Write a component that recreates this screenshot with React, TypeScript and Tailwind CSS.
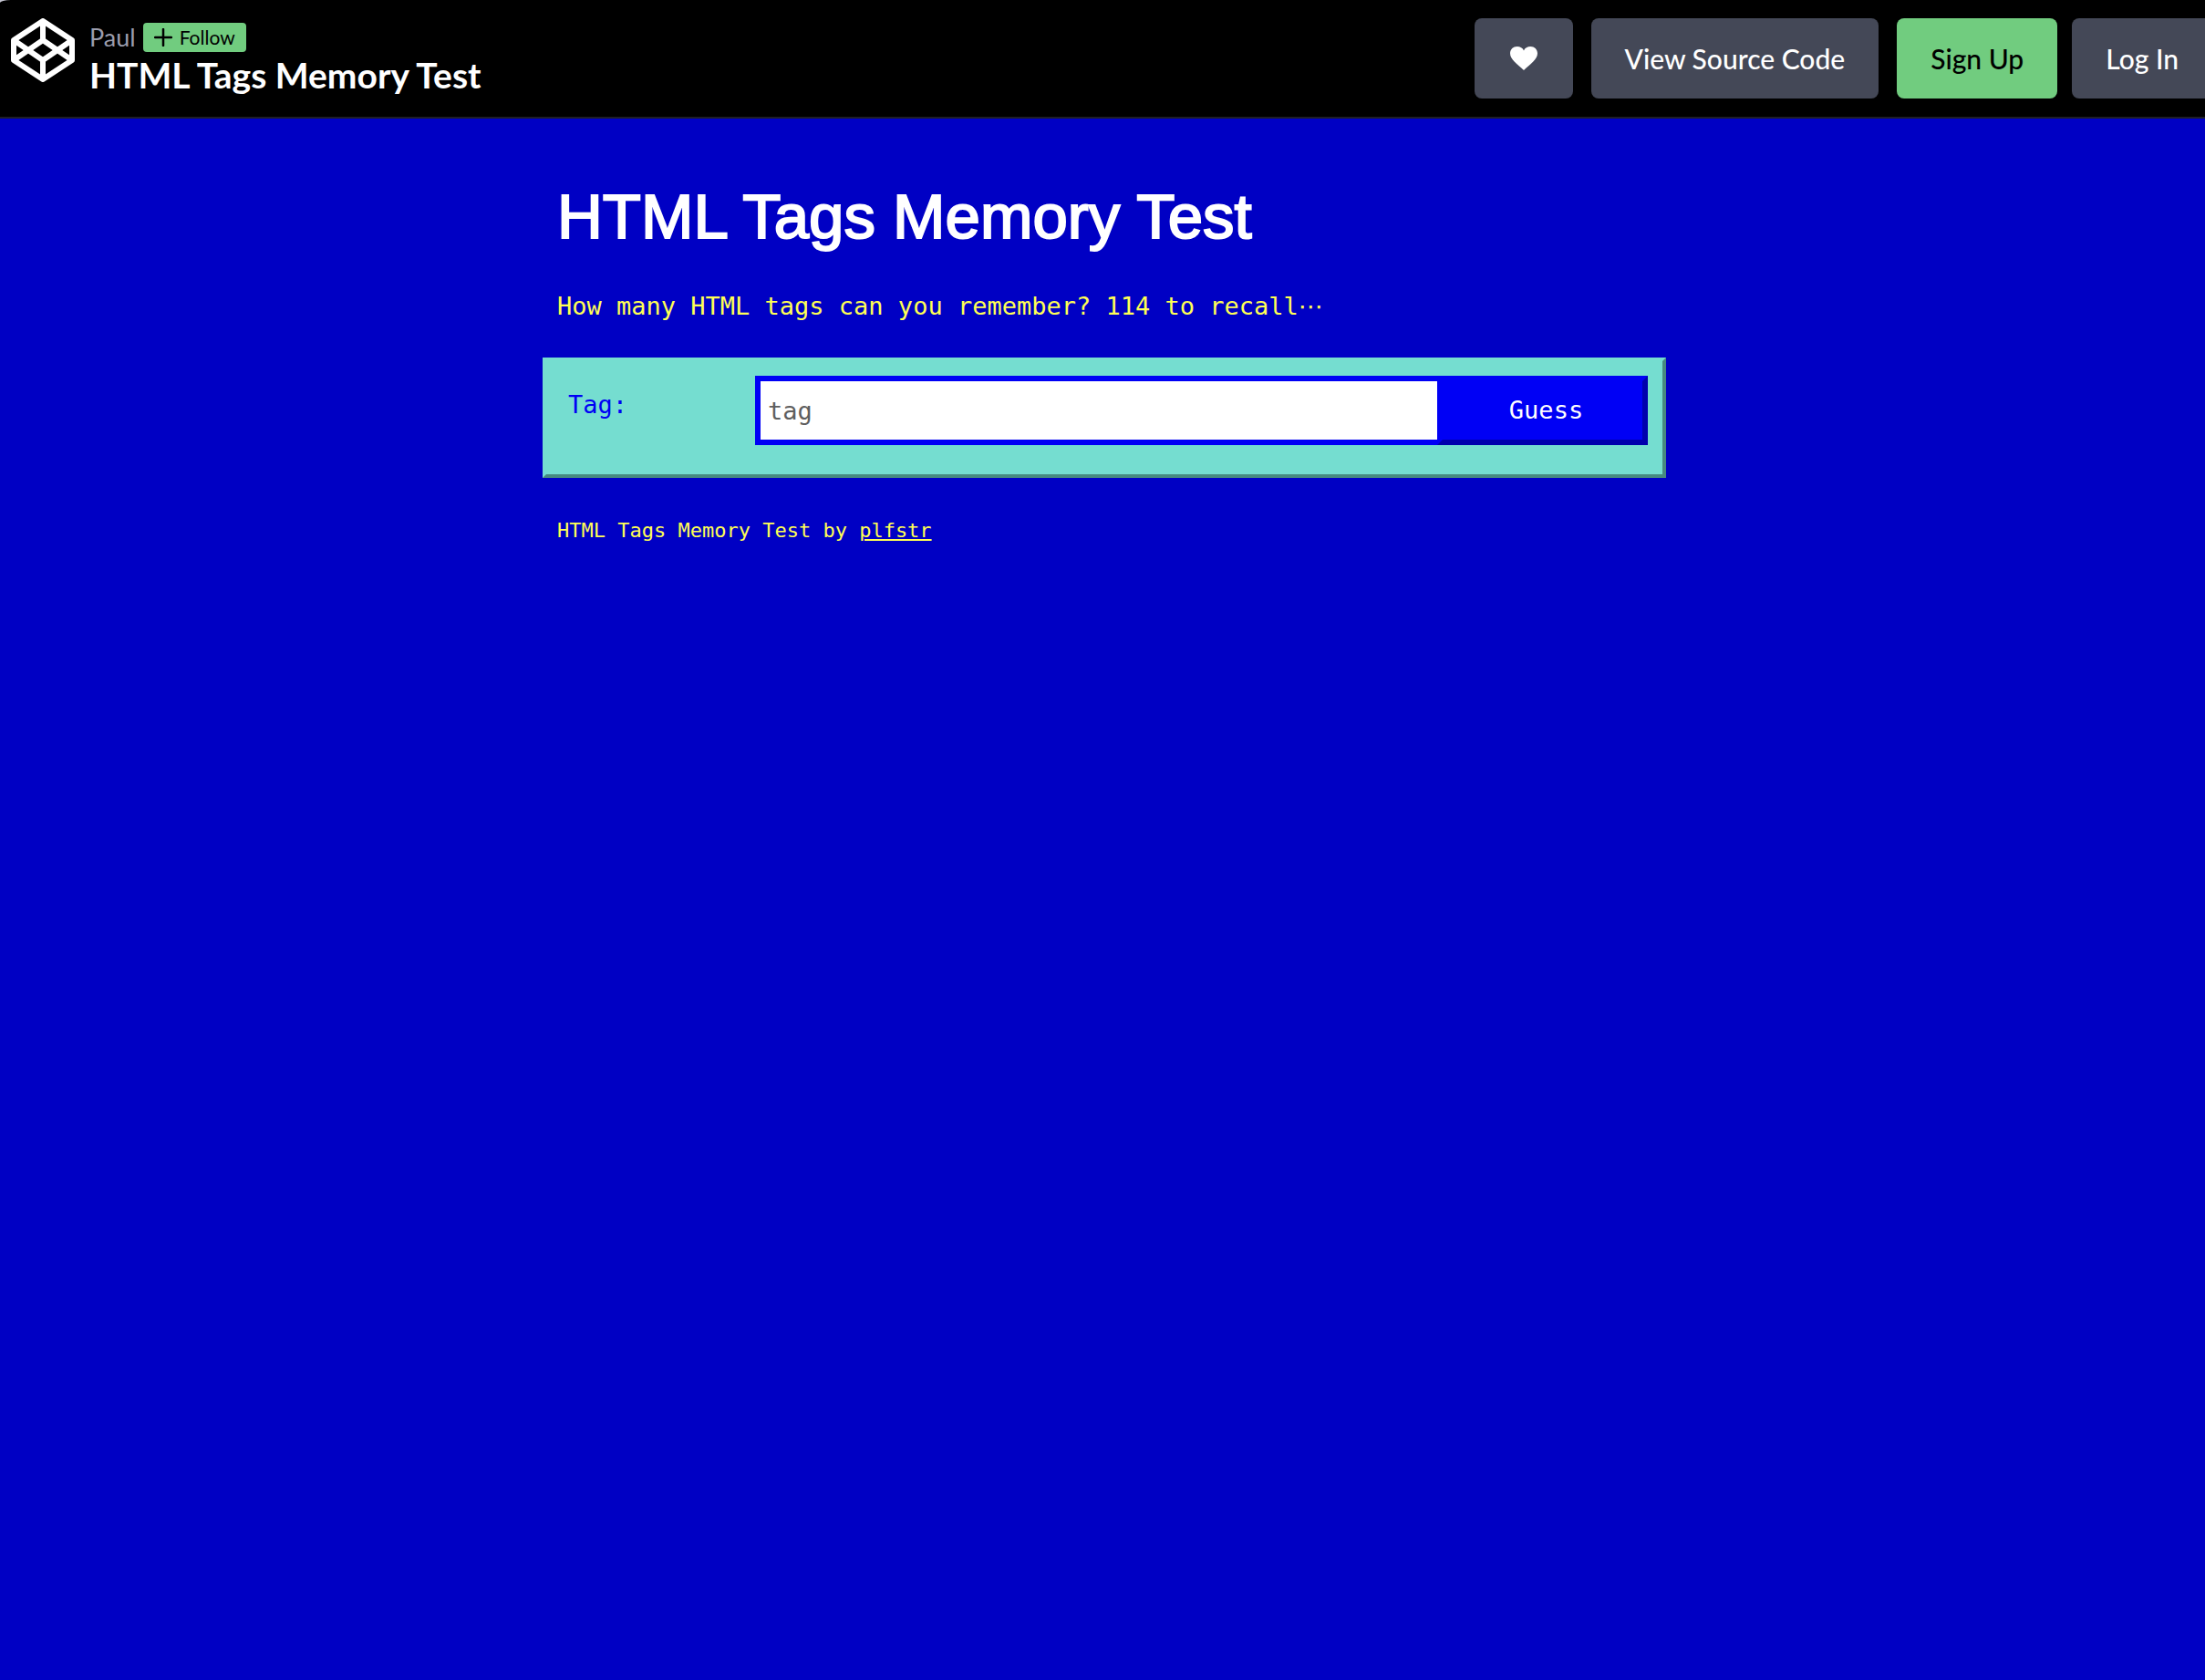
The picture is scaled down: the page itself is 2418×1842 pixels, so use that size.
import React from "react";

function CodePenLogo() {
  return (
    <svg viewBox="0 0 70 70" className="size-[70px] shrink-0" fill="none" stroke="#fff" strokeWidth="6" strokeLinejoin="round" aria-label="CodePen">
      <path d="M35 3 L67 24 V46 L35 67 L3 46 V24 Z" />
      <path d="M35 3 V24 M35 46 V67 M3 24 L35 46 L67 24 M3 46 L35 24 L67 46" />
    </svg>
  );
}

export default function App() {
  return (
    <div className="flex min-h-screen flex-col overflow-x-hidden bg-[#0000c4]">
      <div className="bg-[#c4c4d0]">
        <header className="flex h-[130px] items-start rounded-tl-[12px_3px] border-b-2 border-[#1e1f26] bg-black pt-5 pl-3 font-['Lato',sans-serif]">
          <a href="#home" className="shrink-0"><CodePenLogo /></a>
          <div className="ml-4 flex-1 pt-[5px]">
            <div className="flex h-8 items-center gap-2">
              <a href="#paul" className="text-[27px] leading-8 text-[#9b9dad]">Paul</a>
              <button className="flex h-8 items-center gap-2 rounded bg-[#71cc7f] px-3 text-[21px] leading-8 text-black">
                <svg viewBox="0 0 20 20" className="size-5" stroke="currentColor" strokeWidth="2.500" strokeLinecap="round"><path d="M10 1V19M1 10H19" /></svg>
                Follow
              </button>
            </div>
            <div className="text-[39px] leading-[50px] font-bold whitespace-nowrap text-white">HTML Tags Memory Test</div>
          </div>
          <nav className="-mr-2 flex h-[88px] shrink-0 text-[30px] font-medium text-white">
            <button aria-label="Love" className="mr-5 flex w-[108px] items-center justify-center rounded-lg bg-[#444857]">
              <svg viewBox="0 0 32 28" className="h-7 w-8" fill="#fff"><path d="M16 27C9 20 1 15.500 1 8.500C1 4 4.500 1 8.500 1C12 1 15 2.500 16 5.500C17 2.500 20 1 23.500 1C27.500 1 31 4 31 8.500C31 15.500 23 20 16 27Z" /></svg>
            </button>
            <button className="mr-5 rounded-lg bg-[#444857] px-[37px]">View Source Code</button>
            <button className="mr-4 rounded-lg bg-[#71cc7f] px-[37px] text-black">Sign Up</button>
            <button className="rounded-lg bg-[#444857] px-[37px]">Log In</button>
          </nav>
        </header>
      </div>
      <main className="mx-auto w-full max-w-[1236px] pl-1 font-['DejaVu_Sans_Mono',monospace] text-[27px] text-[#ffff54]">
        <h1 className="mt-[62px] px-4 font-['Liberation_Sans',sans-serif] text-[69px] leading-[92px] font-normal text-white [-webkit-text-stroke:2px_white]">HTML Tags Memory Test</h1>
        <p className="mt-8 px-4 leading-10">
          How many HTML tags can you remember? 114 to recall<span className="font-['DejaVu_Sans',sans-serif] leading-none">⋯</span>
        </p>
        <form className="mt-9 flex h-[132px] items-start border-4 border-t-[#75ddd0] border-r-[#478a80] border-b-[#478a80] border-l-[#75ddd0] bg-[#75ddd0] pt-4 pr-4 pl-6" onSubmit={(e) => e.preventDefault()}>
          <label htmlFor="tag" className="w-[205px] shrink-0 pt-3 leading-10 text-[#0000f5]">Tag:</label>
          <input id="tag" placeholder="tag" className="h-[76px] min-w-0 flex-1 border-6 border-r-0 border-[#0000f5] bg-white px-2 text-black outline-none placeholder:text-[#5e5e5e]" />
          <button className="h-[76px] w-[231px] border-6 border-t-[#0000f5] border-r-[#0000ad] border-b-[#0000ad] border-l-[#0000f5] bg-[#0000f5] pl-2 text-white">Guess</button>
        </form>
        <footer className="mt-[42px] px-4 text-[22px] leading-8">HTML Tags Memory Test by <a href="#plfstr" className="underline">plfstr</a></footer>
      </main>
    </div>
  );
}
